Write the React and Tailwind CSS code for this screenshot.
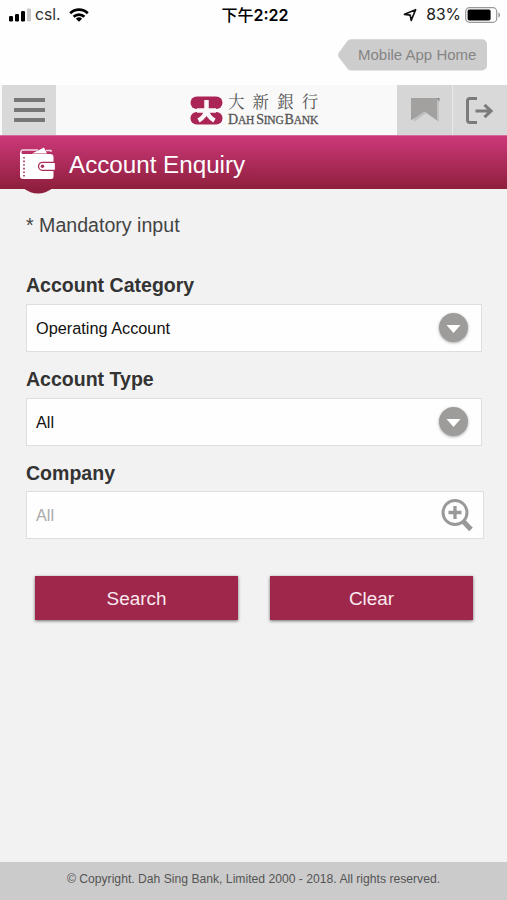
import React, { useState } from "react";

const StatusBar = () => (
  <div className="flex h-[30px] items-center justify-between bg-[#fefefe] pl-[9px] pr-[6px] text-black">
    <div className="flex w-[170px] items-center">
      <svg width="22" height="14" viewBox="0 0 22 14">
        <rect x="0" y="8" width="4" height="5.5" rx="1.2" />
        <rect x="6" y="6" width="4" height="7.5" rx="1.2" />
        <rect x="12" y="3" width="4" height="10.5" rx="1.2" />
        <rect x="18" y="0.5" width="4" height="13" rx="1.2" fill="#c9c9c9" />
      </svg>
      <span className="ml-[4px] font-[Inter,sans-serif] text-[15.700px] leading-[30px] text-[#333]">
        csl.
      </span>
      <svg className="ml-[8px]" width="20" height="14" viewBox="0 0 20 14">
        <path
          d="M1.2 5.2a12.7 12.7 0 0 1 17.6 0M4.6 8.7a7.8 7.8 0 0 1 10.8 0"
          fill="none"
          stroke="#000"
          strokeWidth="2.7"
        />
        <path d="M10 13.8 6.9 10.8a4.5 4.5 0 0 1 6.2 0Z" />
      </svg>
    </div>
    <span className="whitespace-nowrap font-[Inter,'Noto_Sans_CJK_TC',sans-serif] text-[16px] font-medium leading-[30px]">
      下午<span className="font-semibold">2:22</span>
    </span>
    <div className="flex w-[170px] items-center justify-end">
      <svg width="14" height="14" viewBox="0 0 14 14">
        <path
          d="M1.500 6.300 12.600 1.700 8.200 12.400 7.200 7.200Z"
          fill="none"
          stroke="#111"
          strokeWidth="1.7"
          strokeLinejoin="round"
        />
      </svg>
      <span className="ml-[9px] font-[Inter,sans-serif] text-[15.700px] leading-[30px] text-[#222]">
        83%
      </span>
      <svg className="ml-[4px]" width="36" height="16" viewBox="0 0 36 16">
        <rect x="0.7" y="0.7" width="31" height="14.6" rx="3.8" fill="none" stroke="#999" strokeWidth="1.2" />
        <rect x="2.6" y="2.6" width="23" height="10.8" rx="1.6" />
        <path d="M33.4 5.5q1.8.6 1.8 2.5t-1.8 2.5Z" fill="#999" />
      </svg>
    </div>
  </div>
);

const AppHomeLink = () => (
  <div className="flex h-[55px] justify-end bg-[#fefefe] pr-[20px] pt-[9px]">
    <a className="relative flex h-[32px] w-[149px] items-center pl-[20px]">
      <svg className="absolute left-0 top-0" width="149" height="32" viewBox="0 0 149 32">
        <path
          d="M13 .2H144a5 5 0 0 1 5 5V26.500a5 5 0 0 1-5 5H13Q10.500 31.500 9 29L.6 18Q-.4 16 .6 14L9 2.500Q10.500.2 13 .2Z"
          fill="#cdcdcd"
        />
      </svg>
      <span className="relative whitespace-nowrap text-[15px] leading-[32px] text-[#858585]">
        Mobile App Home
      </span>
    </a>
  </div>
);

const BankLogo = () => (
  <div className="flex items-center gap-[5px]">
    <svg width="33" height="29" viewBox="0 0 33 29">
      <rect x="0.500" y="0.500" width="32" height="12.500" rx="6.200" fill="#aa2555" />
      <rect x="0.500" y="16" width="32" height="12.500" rx="6.200" fill="#aa2555" />
      <path
        d="M16.500 4V14M7 14.500H26M16.500 13.500Q15.500 20.500 8.500 24.500M16.500 13.500Q17.500 20.500 24.500 24.500"
        fill="none"
        stroke="#f9f7f8"
        strokeWidth="4.500"
      />
    </svg>
    <div className="flex flex-col gap-[2px] pt-[1px] text-[#555]">
      <span className="w-[92px] whitespace-nowrap font-['Noto_Serif_CJK_TC','Noto_Sans_CJK_TC',serif] text-[16.500px] leading-[17px] tracking-[8.100px]">
        大新銀行
      </span>
      <span className="whitespace-nowrap font-['Liberation_Serif',serif] text-[14px] leading-[15px] tracking-[-0.200px] [-webkit-text-stroke:0.3px_#555]">
        D<span className="text-[11.500px]">AH</span>
        <span className="ml-[2px]">S</span>
        <span className="text-[11.500px]">ING</span>
        <span className="ml-[1px]">B</span>
        <span className="text-[11.500px]">ANK</span>
      </span>
    </div>
  </div>
);

const Header = () => (
  <header className="flex h-[50px] justify-between bg-[#f9f9f9] pl-[2px]">
    <button className="flex w-[54px] items-center justify-center bg-[#d9d9d9]">
      <span className="flex w-[31px] flex-col gap-[6px]">
        <span className="h-[4px] bg-[#777]" />
        <span className="h-[4px] bg-[#777]" />
        <span className="h-[4px] bg-[#777]" />
      </span>
    </button>
    <div className="ml-[57px] flex items-center">
      <BankLogo />
    </div>
    <div className="flex gap-px bg-[#e9e9e9]">
      <button className="flex w-[55px] items-center justify-center bg-[#d6d6d6]">
        <svg width="30" height="26" viewBox="0 0 30 26">
          <path d="M3 1H28L29 3V25L16.500 16 4 25Z" fill="#c2c1c1" />
          <path d="M1 1H27V23.500L14.500 14.500 1 23.500Z" fill="#a3a0a0" />
          <path d="M26.500 1H29.500V4.500Z" fill="#858383" />
        </svg>
      </button>
      <button className="flex w-[54px] items-center justify-center bg-[#d9d9d9] pr-[2px]">
        <svg width="28" height="29" viewBox="0 0 28 29" fill="none" stroke="#7b7b7b" strokeWidth="3">
          <path d="M12 2.500H5Q2.500 2.500 2.500 5V24Q2.500 26.500 5 26.500H12" />
          <path d="M10.500 15H26M19.500 8.800 26 15 19.500 21.200" />
        </svg>
      </button>
    </div>
  </header>
);

const WalletIcon = () => (
  <svg className="mt-[3px]" width="37" height="34" viewBox="0 0 37 34">
    <path d="M13 6.500 25 0.500 28 6.500Z" fill="#fff" />
    <path d="M27 3.500H32V5M2 7.500V5Q2 3 4 3H19" fill="none" stroke="#f6dce7" strokeWidth="1.300" />
    <path
      d="M1 4Q1.500 7 4 7H31Q34.500 7 34.500 10V29.500Q34.500 32 32 32H4Q1 32 1 29Z"
      fill="#fff"
    />
    <path d="M5 10V30" stroke="#aa2b5c" strokeWidth="1.600" strokeDasharray="1.600 2" />
    <path
      d="M36.500 15.300H23.500a4 4 0 0 0 0 8H36.500Z"
      fill="#fff"
      stroke="#aa2b5c"
      strokeWidth="1.300"
    />
    <circle cx="23.500" cy="19.300" r="1.700" fill="#aa2b5c" />
  </svg>
);

const PageTitle = () => (
  <div className="relative flex h-[54px] items-center border-t border-[#d56a9d] bg-linear-to-b from-[#cc387a] to-[#8f1f3d] pl-[19px]">
    {/* Round tab behind the icon, hangs below the bar */}
    <svg className="absolute left-[23px] top-[52px]" width="30" height="6" viewBox="0 0 30 6">
      <path d="M0 0H30Q15 11 0 0Z" fill="#8f1f3d" />
    </svg>
    <WalletIcon />
    <h1 className="ml-[13px] mt-[4px] whitespace-nowrap text-[24.200px] leading-[30px] text-white">
      Account Enquiry
    </h1>
  </div>
);

const DropdownIcon = () => (
  <span className="mb-[1px] flex h-[29px] w-[29px] items-center justify-center rounded-full bg-[#9d9c9b] shadow-[0_1px_3px_rgba(0,0,0,0.35)]">
    <svg className="mt-[2px]" width="15" height="8" viewBox="0 0 15 8">
      <path d="M0.500 0H14.500L7.500 8Z" fill="#fff" />
    </svg>
  </span>
);

const SelectField = ({ label, value }) => (
  <div className="h-[94px] w-[456px]">
    <label className="block h-[31px] pt-[1px] text-[19.550px] font-bold leading-[22px] text-[#333]">
      {label}
    </label>
    <div className="flex h-[48px] items-center justify-between border border-[#dedede] bg-[#fefefe] pl-[9px] pr-[13px]">
      <span className="text-[16.300px] text-[#111]">{value}</span>
      <DropdownIcon />
    </div>
  </div>
);

const ActionButton = ({ text, onClick }) => (
  <button
    onClick={onClick}
    className="h-[44px] w-[203px] bg-[#9e274b] pt-[2px] text-[18.900px] text-[#fbe9ef] shadow-[0_1px_3px_rgba(0,0,0,0.55)]"
  >
    {text}
  </button>
);

const App = () => {
  const [company, setCompany] = useState("");

  return (
    <div className="flex h-[900px] w-[507px] flex-col overflow-hidden bg-[#f2f2f2] font-['Liberation_Sans',Arial,sans-serif]">
      <StatusBar />
      <AppHomeLink />
      <Header />
      <PageTitle />

      <main className="flex-1 pl-[26px] pt-[24px]">
        <p className="h-[60px] text-[19.600px] leading-[24px] text-[#444]">
          * Mandatory input
        </p>
        <SelectField label="Account Category" value="Operating Account" />
        <SelectField label="Account Type" value="All" />

        <div className="w-[458px]">
          <label className="block h-[30px] pt-[1px] text-[19.550px] font-bold leading-[22px] text-[#333]">
            Company
          </label>
          <div className="flex h-[48px] items-center border border-[#dedede] bg-[#fefefe] pl-[9px] pr-[10px]">
            <input
              value={company}
              onChange={(e) => setCompany(e.target.value)}
              placeholder="All"
              type="text"
              className="min-w-0 flex-1 bg-transparent text-[16.300px] outline-none placeholder:text-[#aaa]"
            />
            <svg width="32" height="34" viewBox="0 0 32 34" fill="none" stroke="#999">
              <circle cx="14" cy="14.500" r="12" strokeWidth="3" />
              <path d="M14 8V21M7.500 14.500H20.500" strokeWidth="3.300" />
              <path d="M21.500 22.500 30 31.500" strokeWidth="5" />
            </svg>
          </div>
        </div>

        <div className="ml-[9px] mt-[37px] flex gap-[32px]">
          <ActionButton text="Search" />
          <ActionButton text="Clear" onClick={() => setCompany("")} />
        </div>
      </main>

      <footer className="flex h-[38px] justify-center bg-[#cbcbcb] pt-[8px] text-[12.170px] leading-[18px] text-[#555]">
        © Copyright. Dah Sing Bank, Limited 2000 - 2018. All rights reserved.
      </footer>
    </div>
  );
};

export default App;
